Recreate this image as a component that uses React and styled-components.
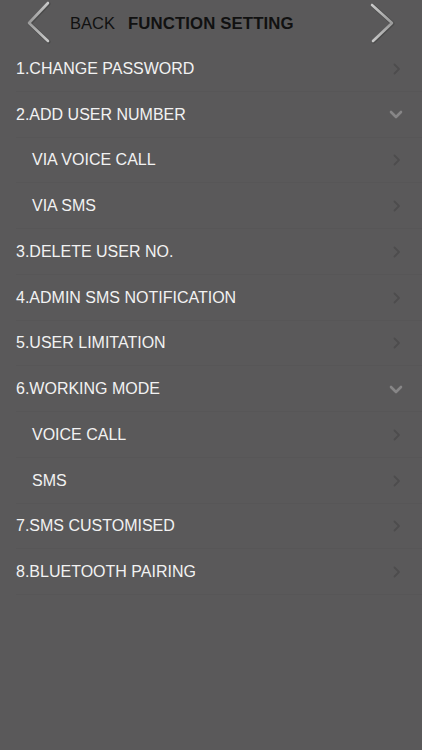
import React from "react";
import styled, { createGlobalStyle } from "styled-components";

const Global = createGlobalStyle`
  html, body { margin: 0; padding: 0; background: #5a595a; }
  body { font-family: "Liberation Sans", Arial, sans-serif; }
`;

const Page = styled.div`
  width: 422px;
  min-height: 750px;
  background: #5a595a;
  display: flex;
  flex-direction: column;
`;

const Header = styled.div`
  height: 46px;
  display: flex;
  align-items: center;
`;

const NavArrow = styled.svg`
  width: 30px;
  height: 46px;
  flex: none;
`;

const LeftNav = styled.div`
  display: flex;
  align-items: center;
  padding-left: 24px;
`;

const Titles = styled.div`
  display: flex;
  align-items: baseline;
  margin-top: 1px;
`;

const BackLabel = styled.span`
  font-size: 16.5px;
  color: #111;
  margin-left: 16px;
`;

const Title = styled.span`
  font-size: 16.8px;
  font-weight: bold;
  color: #111;
  margin-left: 13px;
  letter-spacing: 0.1px;
`;

const RightNav = styled.div`
  margin-left: auto;
  padding-right: 24px;
  display: flex;
`;

const List = styled.div`
  display: flex;
  flex-direction: column;
`;

const Row = styled.div`
  height: 45.75px;
  box-sizing: border-box;
  display: flex;
  align-items: center;
  padding-left: ${(p) => (p.$sub ? 32 : 16)}px;
  padding-right: 21px;
  position: relative;
  &::after {
    content: "";
    position: absolute;
    left: 16px;
    right: 0;
    bottom: 0;
    height: 1px;
    background: #575657;
  }
`;

const Label = styled.span`
  flex: 1;
  font-size: 16px;
  color: #f2f2f2;
`;

const Chevron = styled.svg`
  flex: none;
`;

const items = [
  { t: "1.CHANGE PASSWORD" },
  { t: "2.ADD USER NUMBER", open: true },
  { t: "VIA VOICE CALL", sub: true },
  { t: "VIA SMS", sub: true },
  { t: "3.DELETE USER NO." },
  { t: "4.ADMIN SMS NOTIFICATION" },
  { t: "5.USER LIMITATION" },
  { t: "6.WORKING MODE", open: true },
  { t: "VOICE CALL", sub: true },
  { t: "SMS", sub: true },
  { t: "7.SMS CUSTOMISED" },
  { t: "8.BLUETOOTH PAIRING" },
];

function Arrow({ dir }) {
  const id = `g${dir}`;
  const d = dir === "left" ? "M24 3 L5 23 L24 41" : "M4 5 L24 23 L5 41";
  return (
    <NavArrow viewBox="0 0 30 46">
      <defs>
        <linearGradient id={id} x1="0" y1="0" x2="0" y2="1">
          <stop offset="0" stopColor="#c8c8c8" />
          <stop offset="0.5" stopColor="#9a9a9a" />
          <stop offset="1" stopColor="#c8c8c8" />
        </linearGradient>
      </defs>
      <path d={d} fill="none" stroke="#4a4a4a" strokeWidth="4" strokeLinecap="round" strokeLinejoin="round" transform="translate(0.6,0.6)" />
      <path d={d} fill="none" stroke={`url(#${id})`} strokeWidth="2.6" strokeLinecap="round" strokeLinejoin="round" />
    </NavArrow>
  );
}

function RightChevron() {
  return (
    <Chevron width="8" height="12" viewBox="0 0 8 12">
      <path d="M1.5 1.5 L6 6 L1.5 10.5" fill="none" stroke="#4d4c4d" strokeWidth="1.8" strokeLinecap="round" strokeLinejoin="round" />
    </Chevron>
  );
}

function DownChevron() {
  return (
    <Chevron width="14" height="9" viewBox="0 0 14 9" style={{ marginRight: -2 }}>
      <path d="M2 2 L7 7 L12 2" fill="none" stroke="#878687" strokeWidth="2.6" strokeLinecap="round" strokeLinejoin="round" />
    </Chevron>
  );
}

export default function App() {
  return (
    <Page>
      <Global />
      <Header>
        <LeftNav>
          <Arrow dir="left" />
          <Titles>
            <BackLabel>BACK</BackLabel>
            <Title>FUNCTION SETTING</Title>
          </Titles>
        </LeftNav>
        <RightNav>
          <Arrow dir="right" />
        </RightNav>
      </Header>
      <List>
        {items.map((it) => (
          <Row key={it.t} $sub={it.sub}>
            <Label>{it.t}</Label>
            {it.open ? <DownChevron /> : <RightChevron />}
          </Row>
        ))}
      </List>
    </Page>
  );
}
